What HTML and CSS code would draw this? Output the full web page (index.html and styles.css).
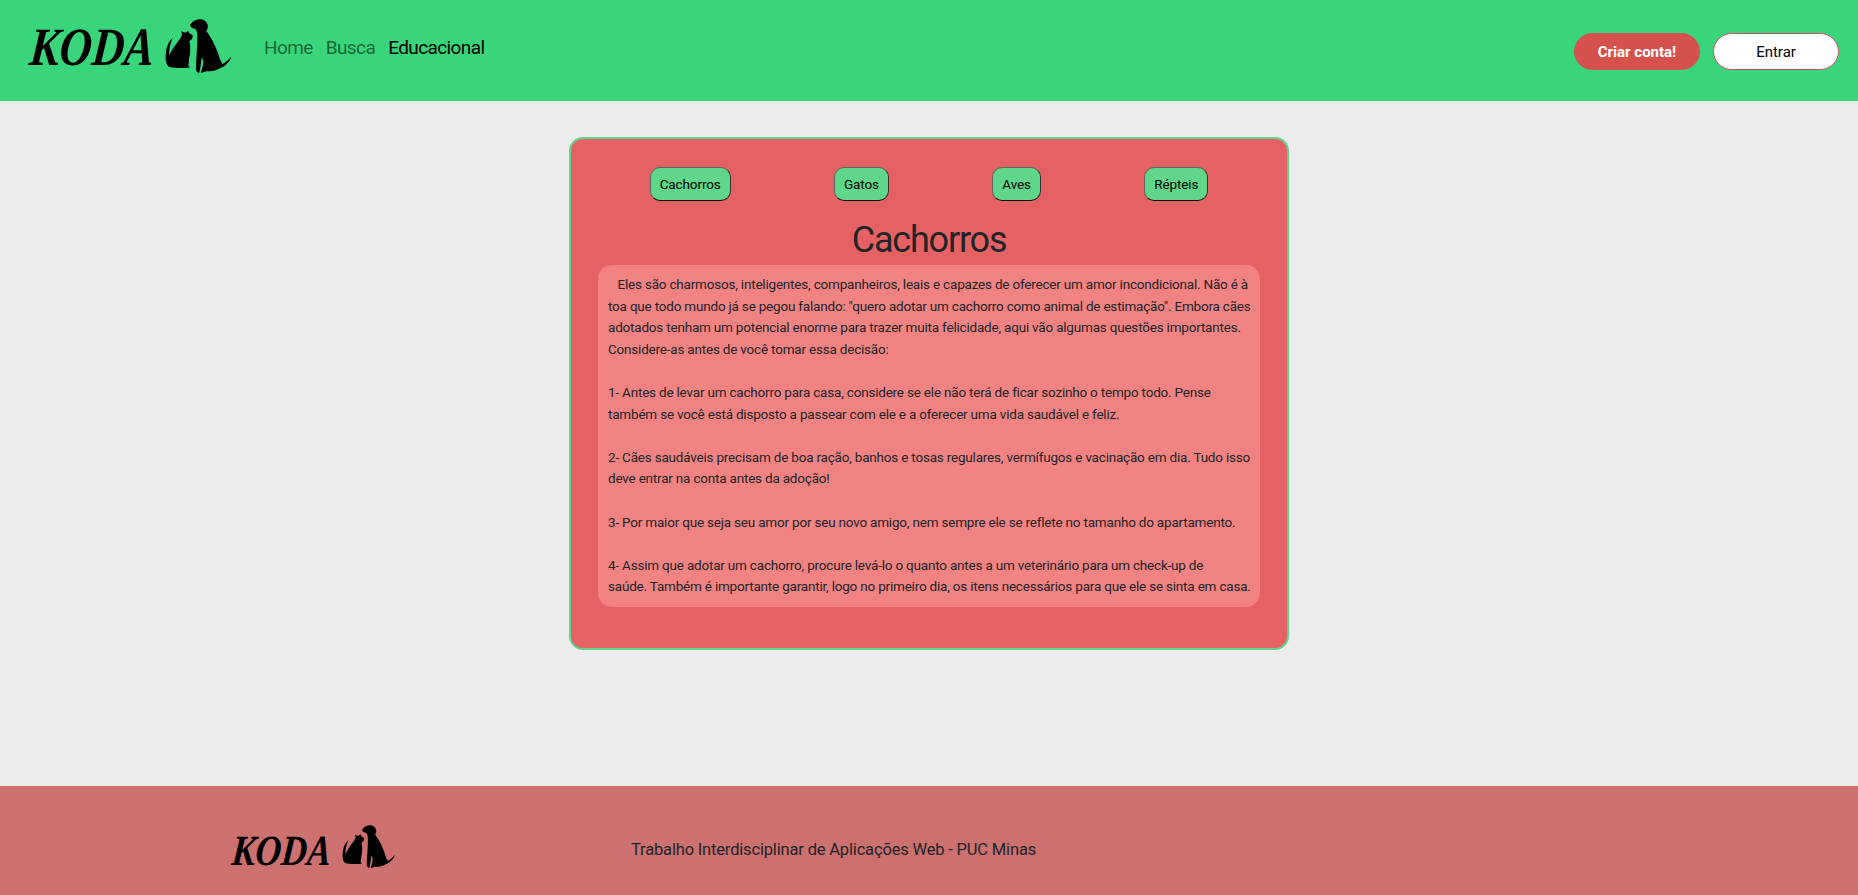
FILE: index.html
```html
<!DOCTYPE html>
<html lang="pt-BR">
<head>
	<meta charset="UTF-8">
	<title>Koda - Educacional</title>
	<link rel="stylesheet" href="styles.css">
</head>
<body>

	<svg class="defs" width="0" height="0">
		<symbol id="pets" viewBox="0 0 240 192">
			<path d="M38 72C28 80 20 95 18 115C15 135 18 150 25 157C35 163 60 162 78 162L90 160L85 155L88 130C92 115 92 95 88 82C95 78 100 70 98 64L88 58L84 50L76 56L64 52L66 62C62 75 50 85 38 105C34 112 30 118 28 125C26 110 30 90 38 72Z"/>
			<path d="M90 33C95 25 105 17 118 16C130 15 140 22 143 33C145 42 142 48 138 50C150 65 165 90 175 120C178 132 182 142 187 150C197 145 205 138 214 128C210 142 198 155 180 163C170 168 160 172 150 172L138 172C132 175 127 177 122 176C126 165 130 155 130 140L125 130L122 155L118 176C113 177 108 172 108 165C108 140 112 100 112 70C112 55 110 48 105 44C98 44 92 40 90 33Z"/>
		</symbol>
	</svg>

	<header class="topbar">
		<div class="left">
			<a class="logo">
				<span class="logo-text">KODA</span>
				<svg class="logo-pets"><use href="#pets"/></svg>
			</a>
			<nav class="menu">
				<a>Home</a>
				<a>Busca</a>
				<a class="active">Educacional</a>
			</nav>
		</div>
		<div class="account">
			<button class="btn-red">Criar conta!</button>
			<button class="btn-white">Entrar</button>
		</div>
	</header>

	<main class="content">
		<section class="card">
			<div class="tabs">
				<button>Cachorros</button>
				<button>Gatos</button>
				<button>Aves</button>
				<button>Répteis</button>
			</div>
			<h1>Cachorros</h1>
			<p class="info">
				&nbsp;&nbsp;&nbsp;Eles são charmosos, inteligentes, companheiros, leais e capazes de oferecer um amor incondicional. Não é à<br>
				toa que todo mundo já se pegou falando: "quero adotar um cachorro como animal de estimação". Embora cães<br>
				adotados tenham um potencial enorme para trazer muita felicidade, aqui vão algumas questões importantes.<br>
				Considere-as antes de você tomar essa decisão:<br>
				<br>
				1- Antes de levar um cachorro para casa, considere se ele não terá de ficar sozinho o tempo todo. Pense<br>
				também se você está disposto a passear com ele e a oferecer uma vida saudável e feliz.<br>
				<br>
				2- Cães saudáveis precisam de boa ração, banhos e tosas regulares, vermífugos e vacinação em dia. Tudo isso<br>
				deve entrar na conta antes da adoção!<br>
				<br>
				3- Por maior que seja seu amor por seu novo amigo, nem sempre ele se reflete no tamanho do apartamento.<br>
				<br>
				4- Assim que adotar um cachorro, procure levá-lo o quanto antes a um veterinário para um check-up de<br>
				saúde. Também é importante garantir, logo no primeiro dia, os itens necessários para que ele se sinta em casa.
			</p>
		</section>
	</main>

	<footer class="bottom">
		<a class="logo logo-small">
			<span class="logo-text">KODA</span>
			<svg class="logo-pets"><use href="#pets"/></svg>
		</a>
		<p>Trabalho Interdisciplinar de Aplicações Web - PUC Minas</p>
	</footer>

</body>
</html>
```

FILE: styles.css
```css
:root {
	--green: #38d57a;
	--green-light: #5fd68a;
	--red: #e66163;
	--red-light: #f38383;
	--red-dark: #d4524b;
	--footer: #cc7070;
	--text: #212529;
}

* {
	box-sizing: border-box;
}

body {
	font-family: Roboto, 'Liberation Sans', sans-serif;
	display: flex;
	flex-direction: column;
	height: 100vh;
	margin: 0;
	background-color: #ececec;
	color: var(--text);
}

.defs {
	position: absolute;
}

.topbar {
	display: flex;
	justify-content: space-between;
	height: 101px;
	padding: 14px 19px 0 30px;
	background-color: var(--green);
}

.left {
	display: flex;
	align-items: flex-start;
}

.logo {
	display: flex;
	align-items: flex-start;
	color: #000;
}

.logo-text {
	display: inline-block;
	width: 130px;
	margin-top: 8px;
	font-family: 'Liberation Serif', serif;
	font-size: 54px;
	line-height: 50px;
	font-style: italic;
	font-weight: bold;
	transform: scaleX(0.83) skewX(-6deg);
	transform-origin: left center;
}

.logo-pets {
	width: 80px;
	height: 64px;
	fill: #000;
}

.menu {
	display: flex;
	gap: 13px;
	margin: 21px 0 0 24px;
	font-size: 19px;
	line-height: 26px;
	letter-spacing: -0.6px;
}

.menu a {
	color: rgba(0,0,0,0.55);
}

.menu a.active {
	color: #000;
}

.account {
	display: flex;
	gap: 13px;
	padding-top: 19px;
}

.account button {
	width: 126px;
	height: 37px;
	border-radius: 19px;
	font-family: inherit;
	font-size: 15px;
}

.btn-red {
	border: none;
	background-color: var(--red-dark);
	color: #fff;
	font-weight: bold;
}

.btn-white {
	border: 1px solid #c94f5b;
	background-color: #fff;
	color: #000;
}

.content {
	flex: 1;
	display: flex;
	justify-content: center;
	padding-top: 36px;
}

.card {
	width: 720px;
	height: 513px;
	padding: 28px 27px 0;
	border: 2px solid var(--green-light);
	border-radius: 14px;
	background-color: var(--red);
}

.tabs {
	display: flex;
	justify-content: space-around;
}

.tabs button {
	height: 34px;
	padding: 0 9px;
	border: 1px solid;
	border-color: #666 #333 #111 #666;
	border-radius: 10px;
	background-color: var(--green-light);
	color: #000;
	font-family: inherit;
	font-size: 13.5px;
	letter-spacing: -0.1px;
}

h1 {
	margin: 17px 0 3px;
	text-align: center;
	font-size: 36px;
	line-height: 44px;
	font-weight: normal;
	letter-spacing: -1.2px;
}

.info {
	margin: 0;
	padding: 9px 10px;
	border-radius: 14px;
	background-color: var(--red-light);
	font-size: 13.5px;
	line-height: 21.6px;
	letter-spacing: -0.2px;
	white-space: nowrap;
}

.bottom {
	display: flex;
	align-items: flex-start;
	height: 109px;
	padding: 35px 0 0 232px;
	background-color: var(--footer);
}

.bottom p {
	margin: 17px 0 0 229px;
	font-size: 16.5px;
	line-height: 24px;
	letter-spacing: -0.17px;
}

.logo-small .logo-text {
	width: 106px;
	margin-top: 10px;
	font-size: 43px;
	line-height: 40px;
}

.logo-small .logo-pets {
	width: 64px;
	height: 51px;
}
```
